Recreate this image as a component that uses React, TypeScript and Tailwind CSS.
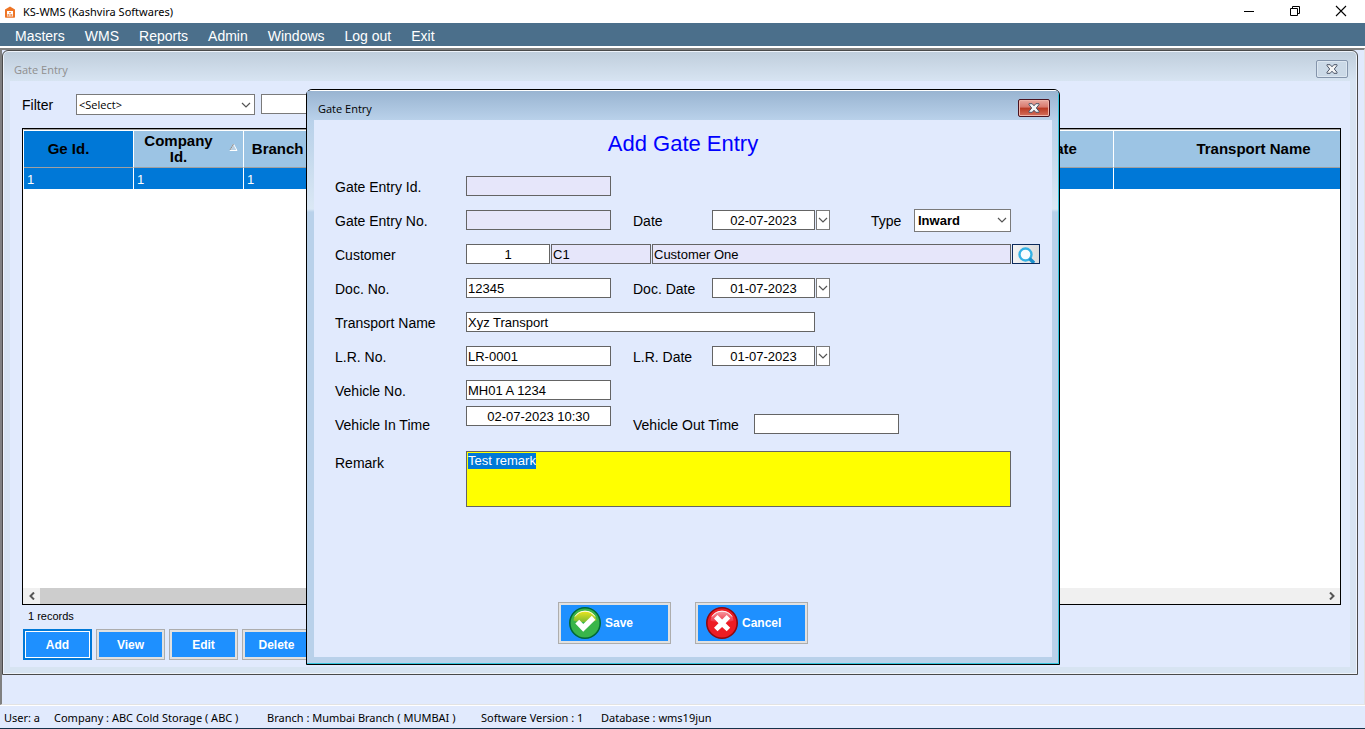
import { useEffect, useRef, type ReactNode } from "react";

const menuItems = ["Masters", "WMS", "Reports", "Admin", "Windows", "Log out", "Exit"];

const columns = [
  { title: "Ge Id.", width: 110, value: "1", active: true },
  { title: "Company Id.", width: 110, value: "1", sorted: true },
  { title: "Branch Id.", width: 110, value: "1" },
  { title: "Ge No.", width: 110, value: "1" },
  { title: "Type", width: 110, value: "Inward" },
  { title: "Customer Name", width: 430, value: "" },
  { title: "Ge Date", width: 110, value: "" },
  { title: "Transport Name", width: 300, value: "" },
];

const statusItems = [
  { text: "User: a", style: "w-[50px]" },
  { text: "Company : ABC Cold Storage ( ABC )", style: "w-[213px]" },
  { text: "Branch : Mumbai Branch ( MUMBAI )", style: "w-[214px]" },
  { text: "Software Version : 1", style: "w-[120px]" },
  { text: "Database : wms19jun", style: "" },
];

const field = "h-5 rounded-none border border-[#646464] px-px text-[13px] leading-4 text-black outline-none";

function Chevron({ className = "" }: { className?: string }) {
  return (
    <svg width="10" height="6" viewBox="0 0 10 6" className={className} fill="none" stroke="#555" strokeWidth="1.2" aria-hidden="true">
      <path d="M1 1l4 4 4-4" />
    </svg>
  );
}

function CloseGlyph() {
  return (
    <svg width="12" height="10" viewBox="0 0 12 10" aria-hidden="true">
      <path d="M1 .7h3.2L6 2.8 7.8.7H11v1L8.3 5 11 8.3v1H7.8L6 7.2 4.2 9.3H1v-1L3.7 5 1 1.7z" fill="#f4f4f4" stroke="#4c5568" strokeWidth="1" />
    </svg>
  );
}

function Label({ htmlFor, className, children }: { htmlFor: string; className: string; children: ReactNode }) {
  return (
    <label htmlFor={htmlFor} className={`shrink-0 pt-0.5 text-sm leading-5 ${className}`}>
      {children}
    </label>
  );
}

function Row({ children }: { children: ReactNode }) {
  return <div className="flex h-[34px] items-center">{children}</div>;
}

function DateField({ id, label, value }: { id: string; label: string; value: string }) {
  return (
    <>
      <Label htmlFor={id} className="ml-[22px] w-[79px]">{label}</Label>
      <input id={id} defaultValue={value} className={`${field} w-[103px] bg-white text-center`} />
      <button type="button" aria-label={`Choose ${label}`} className="ml-px flex h-5 w-3.5 items-center justify-center border border-[#7a7a7a] bg-white">
        <Chevron />
      </button>
    </>
  );
}

function GridButton({ children, primary = false }: { children: ReactNode; primary?: boolean }) {
  const frame = primary ? "border-2 border-[#0078d7] bg-white p-px" : "border border-[#adadad] bg-[#e1e1e1] p-0.5";
  return (
    <button type="button" className={`flex h-[31px] w-[69px] ${frame}`}>
      <span className="flex flex-1 items-center justify-center self-stretch bg-[#1e90ff] text-xs font-bold text-white">{children}</span>
    </button>
  );
}

function ActionButton({ icon, children }: { icon: ReactNode; children: ReactNode }) {
  return (
    <button type="button" className="flex h-[42px] w-[113px] border border-[#adadad] bg-[#e1e1e1] p-0.5">
      <span className="flex flex-1 items-center gap-1 self-stretch bg-[#1e90ff] pl-2 text-xs font-bold text-white">
        {icon}
        {children}
      </span>
    </button>
  );
}

function SaveIcon() {
  return (
    <svg width="32" height="32" viewBox="0 0 32 32" aria-hidden="true">
      <defs>
        <linearGradient id="saveShine" x1="0" y1="0" x2="0" y2="1">
          <stop offset="0" stopColor="#f3e61c" />
          <stop offset="1" stopColor="#7cbc32" />
        </linearGradient>
      </defs>
      <circle cx="16" cy="16" r="15.2" fill="#39b54a" stroke="#006838" strokeWidth="1.6" />
      <path d="M4.5 13.5C5 8 10 3.8 16 3.8S27 8 27.5 13.5C23 15.5 9 15.5 4.5 13.5z" fill="url(#saveShine)" />
      <path d="M6 9.5C8.5 5.8 12 4.2 16 4.2s7.5 1.6 10 5.3" fill="none" stroke="#fff" strokeWidth="1" />
      <path d="M6.3 16.5l3.9-3.7 4.1 4.3 8.5-8.3 3.6 3.9-12.2 12z" fill="#fff" />
    </svg>
  );
}

function CancelIcon() {
  return (
    <svg width="32" height="32" viewBox="0 0 32 32" aria-hidden="true">
      <defs>
        <linearGradient id="cancelShine" x1="0" y1="0" x2="0" y2="1">
          <stop offset="0" stopColor="#f7a0a8" />
          <stop offset="1" stopColor="#ee3040" />
        </linearGradient>
      </defs>
      <circle cx="16" cy="16" r="15.2" fill="#ed1c24" stroke="#8c0a10" strokeWidth="1.6" />
      <path d="M4.5 13.5C5 8 10 3.8 16 3.8S27 8 27.5 13.5C23 15.5 9 15.5 4.5 13.5z" fill="url(#cancelShine)" />
      <path d="M6 9.5C8.5 5.8 12 4.2 16 4.2s7.5 1.6 10 5.3" fill="none" stroke="#fff" strokeWidth="1" />
      <path d="M8 11.5L11.5 8l4.6 4.4L20.7 8l3.5 3.5-4.5 4.7 4.5 4.6-3.5 3.5-4.6-4.4-4.6 4.4L8 20.8l4.5-4.6z" fill="#fff" />
    </svg>
  );
}

function EntryDialog() {
  const remark = useRef<HTMLTextAreaElement>(null);
  useEffect(() => {
    remark.current?.focus();
    remark.current?.select();
  }, []);

  return (
    <section role="dialog" aria-label="Gate Entry" className="flex min-h-[576px] w-[754px] flex-col rounded-t-md border border-black bg-[#b9d1ea]">
      <div className="flex flex-1 flex-col rounded-t-[5px] border-r border-b border-t border-t-white border-r-[#35c4dc] border-b-[#35c4dc] bg-[linear-gradient(to_bottom,#99b4d1_0px,#b9d1ea_30px,#c3d8ec_60px,#dbe8f5_118px,#b9d1ea_121px,#b9d1ea_100%)] pb-1.5">
        <header className="flex h-[29px] shrink-0 items-center justify-between bg-[linear-gradient(to_bottom,#99b4d1,#b9d1ea)] pr-2 pl-[11px]">
          <span className="pt-1.5 font-['Open_Sans',sans-serif] text-[11px] leading-4">Gate Entry</span>
          <button type="button" aria-label="Close" className="mt-1 flex h-[18px] w-8 items-center justify-center rounded-xs border border-[#4a1420] bg-[linear-gradient(to_bottom,#e8a9a0_0%,#d8786c_45%,#b93922_50%,#d4705c_100%)] shadow-[inset_0_0_0_1px_#efb4a9]">
            <CloseGlyph />
          </button>
        </header>
        <form className="mr-1.5 ml-[7px] flex flex-1 flex-col bg-[#e1eafd] pl-[21px]" onSubmit={(e) => e.preventDefault()}>
          <h1 className="mr-[21px] h-[49px] text-center text-[22px] leading-[48px] text-[#0000ff]">Add Gate Entry</h1>
          <Row>
            <Label htmlFor="entryId" className="w-[131px]">Gate Entry Id.</Label>
            <input id="entryId" readOnly className={`${field} w-[145px] bg-[#e6e6fa]`} />
          </Row>
          <Row>
            <Label htmlFor="entryNo" className="w-[131px]">Gate Entry No.</Label>
            <input id="entryNo" readOnly className={`${field} w-[145px] bg-[#e6e6fa]`} />
            <DateField id="date" label="Date" value="02-07-2023" />
            <Label htmlFor="type" className="ml-[41px] w-[43px]">Type</Label>
            <div className="relative">
              <select id="type" className="block h-[23px] w-[97px] appearance-none rounded-none border border-[#7a7a7a] bg-white pt-0.5 pl-[3px] text-[13px] font-bold leading-4 outline-none">
                <option>Inward</option>
                <option>Outward</option>
              </select>
              <Chevron className="pointer-events-none absolute top-2 right-1" />
            </div>
          </Row>
          <Row>
            <Label htmlFor="customer" className="w-[131px]">Customer</Label>
            <div className="flex gap-px">
              <input id="customer" defaultValue="1" className={`${field} w-[84px] bg-white text-center`} />
              <input aria-label="Customer code" readOnly defaultValue="C1" className={`${field} w-[100px] bg-[#e6e6fa]`} />
              <input aria-label="Customer name" readOnly defaultValue="Customer One" className={`${field} w-[359px] bg-[#e6e6fa]`} />
              <button type="button" aria-label="Find customer" className="flex h-5 w-7 items-end justify-center border border-[#0b2a5b] bg-[linear-gradient(to_right,#f4f4f4,#dcdcdc)]">
                <svg width="18" height="16" viewBox="0 0 18 16" fill="none" aria-hidden="true">
                  <circle cx="8.500" cy="7.500" r="6" stroke="#35b2e4" strokeWidth="2.400" fill="#f8fcfe" />
                  <path d="M12.500 11.500l4.500 4.500" stroke="#1c90cc" strokeWidth="3.400" />
                </svg>
              </button>
            </div>
          </Row>
          <Row>
            <Label htmlFor="docNo" className="w-[131px]">Doc. No.</Label>
            <input id="docNo" defaultValue="12345" className={`${field} w-[145px] bg-white`} />
            <DateField id="docDate" label="Doc. Date" value="01-07-2023" />
          </Row>
          <Row>
            <Label htmlFor="transport" className="w-[131px]">Transport Name</Label>
            <input id="transport" defaultValue="Xyz Transport" className={`${field} w-[349px] bg-white`} />
          </Row>
          <Row>
            <Label htmlFor="lrNo" className="w-[131px]">L.R. No.</Label>
            <input id="lrNo" defaultValue="LR-0001" className={`${field} w-[145px] bg-white`} />
            <DateField id="lrDate" label="L.R. Date" value="01-07-2023" />
          </Row>
          <Row>
            <Label htmlFor="vehicleNo" className="w-[131px]">Vehicle No.</Label>
            <input id="vehicleNo" defaultValue="MH01 A 1234" className={`${field} w-[145px] bg-white`} />
          </Row>
          <Row>
            <Label htmlFor="inTime" className="w-[131px]">Vehicle In Time</Label>
            <input id="inTime" defaultValue="02-07-2023 10:30" className={`${field} mb-4 w-[145px] bg-white text-center`} />
            <Label htmlFor="outTime" className="ml-[22px] w-[121px]">Vehicle Out Time</Label>
            <input id="outTime" className={`${field} w-[145px] bg-white`} />
          </Row>
          <div className="mt-2.5 flex items-start">
            <Label htmlFor="remark" className="w-[131px]">Remark</Label>
            <textarea
              id="remark"
              ref={remark}
              defaultValue="Test remark"
              className="block h-14 w-[545px] resize-none rounded-none border border-[#646464] bg-[#ffff00] px-px py-px text-[13px] leading-4 outline-none selection:bg-[#0078d7] selection:text-white"
            />
          </div>
          <div className="mt-auto mr-[21px] flex justify-center gap-6 pb-[13px]">
            <ActionButton icon={<SaveIcon />}>Save</ActionButton>
            <ActionButton icon={<CancelIcon />}>Cancel</ActionButton>
          </div>
        </form>
      </div>
    </section>
  );
}

export default function App() {
  return (
    <div className="relative flex min-h-screen flex-col overflow-hidden bg-[#e1eafd] font-['Liberation_Sans',Arial,sans-serif] text-black">
      <header className="flex h-[23px] shrink-0 items-center justify-between bg-white">
        <div className="flex items-center gap-[7px] pl-1">
          <svg width="12" height="12" viewBox="0 0 12 12" aria-hidden="true">
            <path d="M1 3.5L6 .5l5 3V11a.8.8 0 01-.8.800H1.800A.8.800 0 011 11z" fill="#ee7424" />
            <path d="M3 5h6v5.500H3z" fill="#fff" />
            <path d="M3.500 8h2v2.500h-2zM6.300 8h2v2.500h-2zM5 6h2v1.300H5z" fill="#f19a62" />
          </svg>
          <span className="font-['Noto_Sans',sans-serif] text-[11px] leading-4">KS-WMS (Kashvira Softwares)</span>
        </div>
        <div className="flex items-center gap-[34px] pr-[18px] pb-0.5">
          <button type="button" aria-label="Minimize">
            <svg width="12" height="12" viewBox="0 0 12 12" stroke="#000" aria-hidden="true"><path d="M1 6.500h10" /></svg>
          </button>
          <button type="button" aria-label="Restore">
            <svg width="12" height="12" viewBox="0 0 12 12" fill="none" stroke="#000" aria-hidden="true">
              <path d="M1.500 3.500h7v7h-7zM3.500 3.500v-2h7v7h-2" />
            </svg>
          </button>
          <button type="button" aria-label="Close">
            <svg width="12" height="12" viewBox="0 0 12 12" stroke="#000" strokeWidth="1.100" aria-hidden="true"><path d="M1 1l10 10M11 1L1 11" /></svg>
          </button>
        </div>
      </header>

      <nav className="flex h-[23px] shrink-0 items-center gap-5 bg-[#4b6f8b] pt-0.5 pl-[15px] text-sm text-white">
        {menuItems.map((item) => (
          <a key={item} href="#" className="leading-5">{item}</a>
        ))}
      </nav>

      <main className="flex flex-1 flex-col border-t-2 border-t-white">
        <div className="flex flex-1 flex-col border-t-2 border-r border-b border-l-2 border-t-[#808080] border-r-[#e3e3e3] border-b-[#e3e3e3] border-l-[#808080]">
          <section aria-label="Gate Entry list" className="mr-1.5 mb-[29px] flex min-w-0 flex-1 flex-col rounded-t-md border border-[#4a4a4a] bg-[#d7e4f2] bg-[linear-gradient(to_bottom,#bfcddb_0px,#d7e4f2_30px,#d7e4f2_100%)] shadow-[inset_0_0_0_1px_#eef3fa]">
            <header className="flex h-[30px] shrink-0 items-center justify-between pr-[9px] pl-[11px]">
              <span className="pt-2 font-['Open_Sans',sans-serif] text-[11px] leading-4 text-[#8f8f8f]">Gate Entry</span>
              <button type="button" aria-label="Close" className="mt-1.5 flex h-[18px] w-8 items-center justify-center rounded-xs border border-[#8494ab] bg-[#cbd9e7] shadow-[inset_0_0_0_1px_#dde7f1]">
                <CloseGlyph />
              </button>
            </header>
            <div className="mx-[7px] mb-[7px] flex min-w-0 flex-1 flex-col bg-[#e1eafd] pt-[13px] pr-[9px] pb-[7px] pl-3">
              <div className="flex h-[34px] shrink-0 items-start">
                <label htmlFor="filter" className="w-[54px] pt-px text-sm leading-5">Filter</label>
                <div className="relative">
                  <select id="filter" className="block h-[21px] w-[179px] appearance-none rounded-none border border-[#7a7a7a] bg-white pl-0.5 font-['Open_Sans',sans-serif] text-[11px] leading-4 outline-none">
                    <option>&lt;Select&gt;</option>
                  </select>
                  <Chevron className="pointer-events-none absolute top-2 right-1" />
                </div>
                <input aria-label="Filter value" className="ml-1.5 h-5 w-[179px] border border-[#7a7a7a] bg-white px-0.5 text-[13px] outline-none" />
              </div>

              <div className="flex flex-1 flex-col overflow-hidden border border-black bg-white">
                <div className="h-0 min-w-0 flex-1 overflow-hidden border-t border-l border-[#a0a0a0] border-l-white pt-px">
                  <table className="w-[1390px] table-fixed border-separate border-spacing-0">
                    <thead>
                      <tr className="h-[37px]">
                        {columns.map((c) => (
                          <th key={c.title} style={{ width: c.width }} className={`border-r border-b border-r-white border-b-[#a0a0a0] p-0 text-[15px] leading-4 font-bold ${c.active ? "bg-[#0078d7]" : "bg-[#9cc4e4]"}`}>
                            <span className="flex items-center">
                              <span className="flex-1 text-center">{c.title}</span>
                              <span className="w-5 pl-1.5">
                                {c.sorted && (
                                  <svg width="9" height="8" viewBox="0 0 9 8" className="mb-1" aria-hidden="true">
                                    <path d="M4.500 1L8 7.500H1z" fill="#b9cfe2" stroke="#fff" />
                                    <path d="M4.500 1L1 7" stroke="#8d8d8d" />
                                  </svg>
                                )}
                              </span>
                            </span>
                          </th>
                        ))}
                      </tr>
                    </thead>
                    <tbody>
                      <tr className="h-[21px] bg-[#0078d7] text-white">
                        {columns.map((c) => (
                          <td key={c.title} className="border-r border-white px-[3px] py-0 pt-0.5 text-[13px] leading-4">{c.value}</td>
                        ))}
                      </tr>
                    </tbody>
                  </table>
                </div>
                <div className="flex h-4 shrink-0 items-center bg-[#f0f0f0]">
                  <button type="button" aria-label="Scroll left" className="flex w-[17px] justify-center">
                    <svg width="8" height="8" viewBox="0 0 8 8" fill="none" stroke="#555" strokeWidth="2" aria-hidden="true"><path d="M6 .5L2.500 4 6 7.500" /></svg>
                  </button>
                  <div className="flex flex-1 self-stretch">
                    <div className="w-3/4 bg-[#cdcdcd]" />
                  </div>
                  <button type="button" aria-label="Scroll right" className="flex w-[17px] justify-center">
                    <svg width="8" height="8" viewBox="0 0 8 8" fill="none" stroke="#555" strokeWidth="2" aria-hidden="true"><path d="M2 .5L5.500 4 2 7.500" /></svg>
                  </button>
                </div>
              </div>

              <p className="h-6 shrink-0 pt-1 pl-1.5 text-[11px] leading-[14px]">1 records</p>
              <div className="flex gap-1 pl-px">
                <GridButton primary>Add</GridButton>
                <GridButton>View</GridButton>
                <GridButton>Edit</GridButton>
                <GridButton>Delete</GridButton>
              </div>
            </div>
          </section>
        </div>
      </main>

      <footer className="flex h-6 shrink-0 items-center border-t border-b border-t-white border-b-[#16324a] pt-0.5 pl-1 font-['Noto_Sans',sans-serif] text-[11px] leading-4 whitespace-nowrap">
        {statusItems.map((s) => (
          <span key={s.text} className={s.style}>{s.text}</span>
        ))}
      </footer>

      <div className="absolute inset-0 flex items-start justify-center pt-[89px] pl-px">
        <EntryDialog />
      </div>
    </div>
  );
}
